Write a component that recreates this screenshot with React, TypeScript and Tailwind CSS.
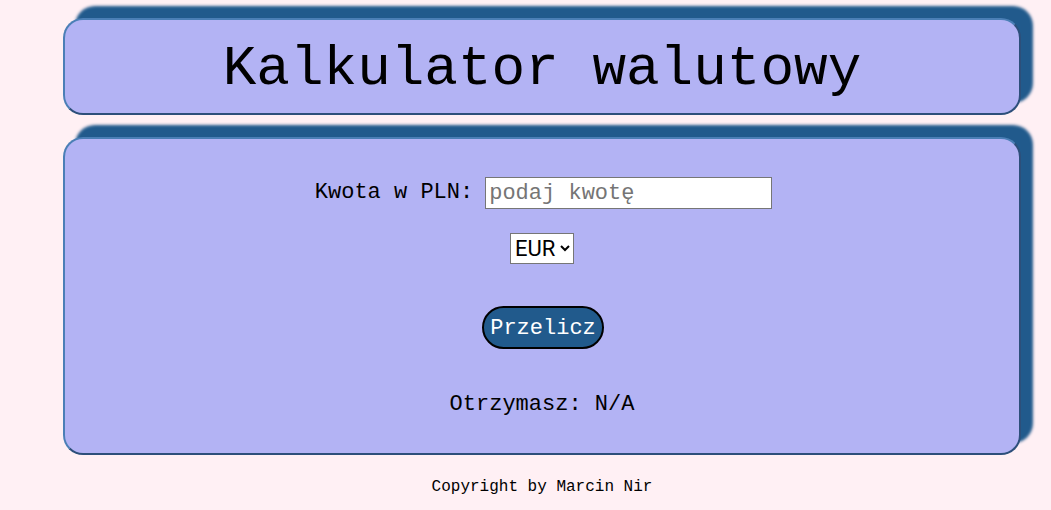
import { useState } from "react";

const mono = "font-['Liberation_Mono','DejaVu_Sans_Mono',monospace]";

const panel =
  "rounded-[20px] border-2 border-t-[#4b7fb6] border-l-[#4b7fb6] border-r-[#2d4f7a] border-b-[#2d4f7a] bg-[#b3b3f4] shadow-[12px_-12px_3px_#215a8c]";

export default function App() {
  const [amount, setAmount] = useState("");
  const [currency, setCurrency] = useState("EUR");

  return (
    <div className={`min-h-[510px] bg-[#fff0f4] pl-[63px] pr-[30px] pt-[18px] text-black ${mono}`}>
      <header className={`h-[97px] flex items-center justify-center ${panel}`}>
        <h1 className="text-[56px] leading-none pt-[5px]">Kalkulator walutowy</h1>
      </header>

      <main className={`mt-[22px] h-[318px] flex flex-col items-center pt-[38px] ${panel}`}>
        <div className="flex items-center gap-[12px] pl-[3px]">
          <label htmlFor="kwota" className="text-[22px] leading-[32px]">
            Kwota w PLN:
          </label>
          <input
            id="kwota"
            type="text"
            value={amount}
            onChange={(e) => setAmount(e.target.value)}
            placeholder="podaj kwotę"
            className={`w-[287px] h-[32px] bg-white border border-[#767676] px-[3px] text-[22px] placeholder:text-[#757575] outline-none ${mono}`}
          />
        </div>

        <select
          value={currency}
          onChange={(e) => setCurrency(e.target.value)}
          className="mt-[24px] h-[31px] w-[64px] bg-white border border-[#767676] px-0 text-[22px] font-['Roboto','Liberation_Sans',sans-serif]"
        >
          <option>EUR</option>
          <option>USD</option>
          <option>GBP</option>
          <option>CHF</option>
        </select>

        <button
          type="button"
          className={`mt-[42px] h-[43px] px-[6px] ml-[2px] rounded-full border-2 border-black bg-[#215a8c] text-white text-[22px] leading-none pt-[2px] ${mono}`}
        >
          Przelicz
        </button>

        <p className="mt-[43px] text-[22px] leading-[26px]">Otrzymasz: N/A</p>
      </main>

      <footer className="mt-[20px] text-center text-[16px] leading-[24px]">
        Copyright by Marcin Nir
      </footer>
    </div>
  );
}
